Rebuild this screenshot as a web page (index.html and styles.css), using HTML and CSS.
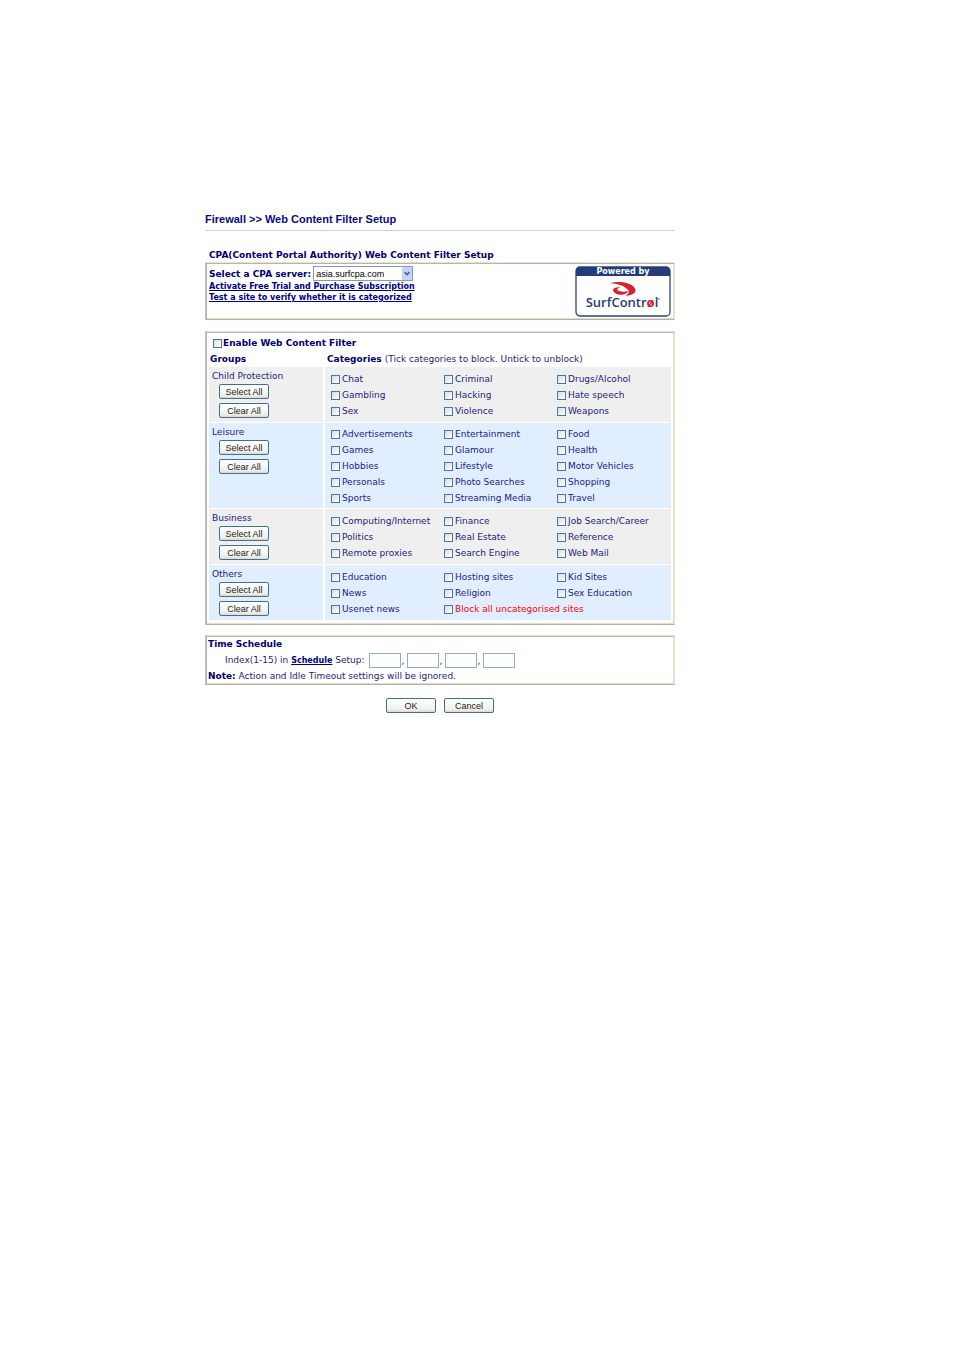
FILE: index.html
```html
<!DOCTYPE html>
<html lang="en">
<head>
	<meta charset="utf-8">
	<title>Web Content Filter Setup</title>
	<link rel="stylesheet" href="styles.css">
</head>
<body>
	<h1>Firewall &gt;&gt; Web Content Filter Setup</h1>

	<form action="#">
		<h2>CPA(Content Portal Authority) Web Content Filter Setup</h2>
		<div class="panel server">
			<div class="server-info">
				<div class="server-row">
					<label for="server">Select a CPA server:</label>
					<span class="select">
						<select id="server">
							<option>asia.surfcpa.com</option>
						</select>
						<svg class="arrow" viewBox="0 0 10 13" width="10" height="13">
							<rect width="10" height="13" rx="1" fill="#c3d3fb"/>
							<path d="M2.5 5 5 7.5 7.5 5" fill="none" stroke="#4d6185" stroke-width="1.6"/>
						</svg>
					</span>
				</div>
				<a href="#">Activate Free Trial and Purchase Subscription</a>
				<a href="#">Test a site to verify whether it is categorized</a>
			</div>
			<svg class="logo" viewBox="0 0 96 51" width="96" height="51">
				<rect x="1" y="1" width="94" height="49" rx="4" fill="#fff" stroke="#2a4480" stroke-width="1.3"/>
				<path d="M1 10V5a4 4 0 0 1 4-4h86a4 4 0 0 1 4 4v5z" fill="#233d7b"/>
				<text class="logo-top" x="48" y="8">Powered by</text>
				<path d="M35 17c9-2 19-1 24 4 4 5 0 8-9 9 4-2 5-5 2-7-4-4-10-5-17-6z" fill="#d9202e"/>
				<path d="M46 21c-4 1-5 3-2 4 3 1 6 1 9 0-1 4-9 5-13 2-4-3-2-6 6-6z" fill="#d9202e"/>
				<text class="logo-name" x="47" y="41">SurfContr<tspan class="logo-o">ø</tspan>l</text>
				<circle cx="84" cy="33" r="1" fill="#8996b5"/>
			</svg>
		</div>

		<div class="panel filter">
			<label class="enable"><input type="checkbox">Enable Web Content Filter</label>
			<table>
				<thead>
					<tr>
						<th class="groups">Groups</th>
						<th>Categories <span>(Tick categories to block. Untick to unblock)</span></th>
					</tr>
				</thead>
				<tbody>
					<tr>
						<td class="group">
							<p>Child Protection</p>
							<button type="button">Select All</button>
							<button type="button">Clear All</button>
						</td>
						<td>
							<div class="cats">
								<label><input type="checkbox">Chat</label>
								<label><input type="checkbox">Criminal</label>
								<label><input type="checkbox">Drugs/Alcohol</label>
								<label><input type="checkbox">Gambling</label>
								<label><input type="checkbox">Hacking</label>
								<label><input type="checkbox">Hate speech</label>
								<label><input type="checkbox">Sex</label>
								<label><input type="checkbox">Violence</label>
								<label><input type="checkbox">Weapons</label>
							</div>
						</td>
					</tr>
					<tr class="tight">
						<td class="group">
							<p>Leisure</p>
							<button type="button">Select All</button>
							<button type="button">Clear All</button>
						</td>
						<td>
							<div class="cats">
								<label><input type="checkbox">Advertisements</label>
								<label><input type="checkbox">Entertainment</label>
								<label><input type="checkbox">Food</label>
								<label><input type="checkbox">Games</label>
								<label><input type="checkbox">Glamour</label>
								<label><input type="checkbox">Health</label>
								<label><input type="checkbox">Hobbies</label>
								<label><input type="checkbox">Lifestyle</label>
								<label><input type="checkbox">Motor Vehicles</label>
								<label><input type="checkbox">Personals</label>
								<label><input type="checkbox">Photo Searches</label>
								<label><input type="checkbox">Shopping</label>
								<label><input type="checkbox">Sports</label>
								<label><input type="checkbox">Streaming Media</label>
								<label><input type="checkbox">Travel</label>
							</div>
						</td>
					</tr>
					<tr>
						<td class="group">
							<p>Business</p>
							<button type="button">Select All</button>
							<button type="button">Clear All</button>
						</td>
						<td>
							<div class="cats">
								<label><input type="checkbox">Computing/Internet</label>
								<label><input type="checkbox">Finance</label>
								<label><input type="checkbox">Job Search/Career</label>
								<label><input type="checkbox">Politics</label>
								<label><input type="checkbox">Real Estate</label>
								<label><input type="checkbox">Reference</label>
								<label><input type="checkbox">Remote proxies</label>
								<label><input type="checkbox">Search Engine</label>
								<label><input type="checkbox">Web Mail</label>
							</div>
						</td>
					</tr>
					<tr>
						<td class="group">
							<p>Others</p>
							<button type="button">Select All</button>
							<button type="button">Clear All</button>
						</td>
						<td>
							<div class="cats">
								<label><input type="checkbox">Education</label>
								<label><input type="checkbox">Hosting sites</label>
								<label><input type="checkbox">Kid Sites</label>
								<label><input type="checkbox">News</label>
								<label><input type="checkbox">Religion</label>
								<label><input type="checkbox">Sex Education</label>
								<label><input type="checkbox">Usenet news</label>
								<label class="block-all"><input type="checkbox">Block all uncategorised sites</label>
							</div>
						</td>
					</tr>
				</tbody>
			</table>
		</div>

		<div class="panel schedule">
			<h3>Time Schedule</h3>
			<div class="index-row">
				<span>Index(1-15) in <a href="#">Schedule</a> Setup:</span>
				<input type="text" aria-label="Schedule index 1"><i>,</i>
				<input type="text" aria-label="Schedule index 2"><i>,</i>
				<input type="text" aria-label="Schedule index 3"><i>,</i>
				<input type="text" aria-label="Schedule index 4">
			</div>
			<p><b>Note:</b> Action and Idle Timeout settings will be ignored.</p>
		</div>

		<div class="actions">
			<button type="submit">OK</button>
			<button type="button">Cancel</button>
		</div>
	</form>
</body>
</html>
```
FILE: styles.css
```css
*{
	box-sizing: border-box;
}
body{
	margin: 0;
	padding: 212px 279px 40px 205px;
	background: #fff;
	color: #1c1c80;
	font-family: "DejaVu Sans", Verdana, sans-serif;
	font-size: 9px;
	line-height: 12px;
}
h1, h2, h3, p{
	margin: 0;
	font-size: 9px;
}
h1{
	padding-bottom: 4px;
	border-bottom: 1px solid #d0d0ca;
	color: #0a0a80;
	font-family: "Liberation Sans", Arial, sans-serif;
	font-size: 11px;
	line-height: 14px;
}
h2{
	padding: 18px 4px 1px;
}
h2, h3, b, th, .enable, .server label{
	color: #000070;
	font-weight: bold;
}
th span{
	color: #1c1c80;
	font-weight: normal;
}
a{
	color: #000080;
	font-weight: bold;
}
.panel{
	border: 1px solid;
	border-color: #e6e3d3 #e6e3d3 #b5b2a2 #c4c1b2;
	box-shadow: inset 1px 1px #b8b5a6, inset -1px -1px #e0ddcd;
}
.server{
	display: flex;
	justify-content: space-between;
	height: 58px;
	padding: 3px;
}
.server-info{
	display: flex;
	flex-direction: column;
	align-items: flex-start;
}
.server-info a{
	font-size: 8px;
	line-height: 11px;
}
.server-row{
	display: flex;
	align-items: center;
	gap: 2px;
}
.select{
	position: relative;
	display: flex;
}
select{
	appearance: none;
	width: 100px;
	height: 15px;
	padding: 0 12px 0 2px;
	border: 1px solid #7f9db9;
	border-radius: 0;
	background: #fff;
	color: #000;
	font: 9px "Liberation Sans", Arial, sans-serif;
}
.arrow{
	position: absolute;
	top: 1px;
	right: 1px;
	pointer-events: none;
}
.logo-top{
	fill: #fff;
	font: bold 8px "DejaVu Sans", sans-serif;
	text-anchor: middle;
}
.logo-name{
	fill: #233d7b;
	font: 600 13px "Open Sans", sans-serif;
	text-anchor: middle;
}
.logo-o{
	fill: #d9202e;
	font-weight: bold;
}
.filter{
	margin-top: 11px;
	padding: 5px 2px 3px;
}
label{
	display: flex;
	align-items: center;
	gap: 2px;
	white-space: nowrap;
}
.enable{
	padding-left: 5px;
	gap: 1px;
}
input[type=checkbox]{
	appearance: none;
	flex: none;
	width: 9px;
	height: 9px;
	margin: 0;
	border: 1px solid #4a769e;
	background: linear-gradient(135deg, #dcdcd7, #fff);
}
table{
	width: 100%;
	border-spacing: 1px;
}
th{
	height: 16px;
	padding: 1px 2px 0;
	text-align: left;
}
.groups{
	width: 115px;
	padding: 1px 1px 0;
}
td{
	padding: 4px 1px 3px 6px;
	background: #efefef;
	vertical-align: top;
}
.tight td{
	padding-top: 3px;
	padding-bottom: 2px;
}
tbody tr:nth-child(even) td{
	background: #e0eeff;
}
td.group{
	padding-top: 3px;
	padding-left: 3px;
	border-right: 1px solid #fff;
}
button{
	display: block;
	width: 50px;
	height: 15px;
	padding: 0;
	border: 1px solid #406f96;
	border-radius: 2px;
	background: linear-gradient(#fff, #f0f0ea 80%, #dcd8cc);
	color: #222;
	font: 9px "Liberation Sans", Arial, sans-serif;
}
.group button{
	margin: 2px 0 0 7px;
}
.group button + button{
	margin-top: 4px;
}
.cats{
	display: grid;
	grid-template-columns: repeat(3, 1fr);
	grid-auto-rows: 16px;
}
.block-all{
	grid-column: span 2;
	color: #f00;
}
.schedule{
	margin-top: 10px;
	padding: 2px;
}
.index-row{
	display: flex;
	align-items: center;
	padding: 3px 0 2px 17px;
}
.index-row span{
	margin-right: 5px;
}
.index-row i{
	width: 6px;
	font-style: normal;
}
.index-row a{
	font-size: 8px;
}
input[type=text]{
	width: 32px;
	height: 15px;
	padding: 0 2px;
	border: 1px solid #8fadc8;
	font: inherit;
}
.actions{
	display: flex;
	justify-content: center;
	gap: 8px;
	margin-top: 13px;
}
```
